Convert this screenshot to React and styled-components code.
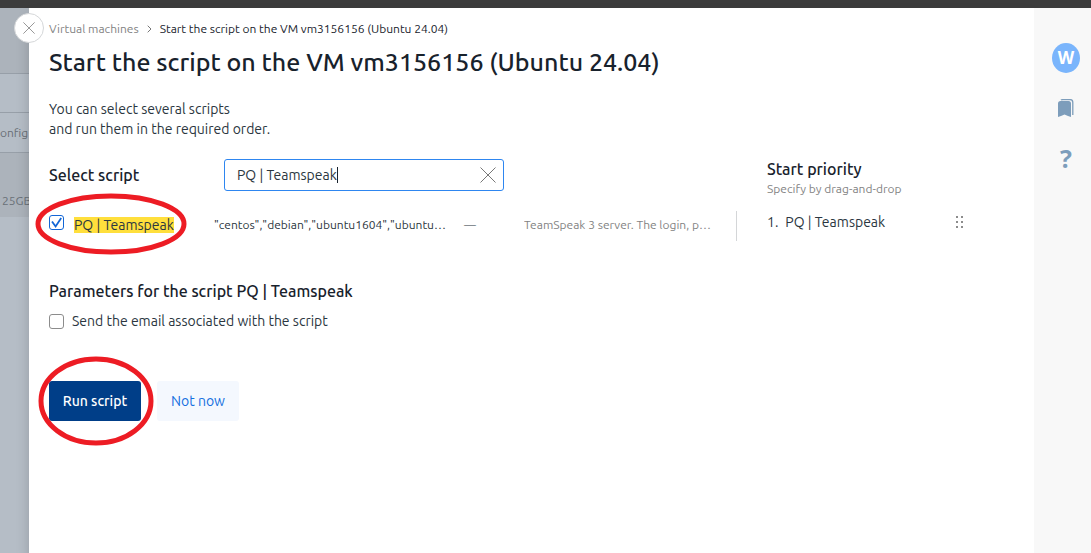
import React, { useState } from "react";
import styled, { createGlobalStyle } from "styled-components";

const GlobalStyle = createGlobalStyle`
  * {
    box-sizing: border-box;
  }
  body {
    margin: 0;
    background: #fff;
    color: #2b3640;
    font: 14px/20px Ubuntu, "Noto Sans", sans-serif;
  }
  button,
  input {
    font: inherit;
    color: inherit;
  }
  h1, h2, p, ol {
    margin: 0;
    padding: 0;
  }
`;

const Page = styled.div`
  display: flex;
  min-height: 100vh;
  border-top: 8px solid #3c3c3c;
`;

const Backdrop = styled.div`
  flex: none;
  width: 29px;
  overflow: hidden;
  background: #b5bdc6;
  color: #697077;
  font-size: 12px;
  white-space: nowrap;
`;

const BackdropRow = styled.div`
  display: flex;
  align-items: ${(props) => props.$align || "center"};
  height: ${(props) => props.$height}px;
  padding-left: ${(props) => props.$indent || 0}px;
  padding-bottom: ${(props) => (props.$align ? 6 : 0)}px;
  background: ${(props) => (props.$dark ? "#acb3bb" : "none")};
  border-bottom: ${(props) => (props.$line ? "1px solid #979fa8" : "0")};
`;

const Drawer = styled.main`
  position: relative;
  flex: 1;
  min-width: 0;
  padding: 11px 20px 40px;
  background: #fff;
  box-shadow: 0 8px 12px rgba(0, 0, 0, 0.18);
`;

const CloseButton = styled.button`
  position: absolute;
  top: 5px;
  left: -15px;
  display: grid;
  place-items: center;
  width: 30px;
  height: 30px;
  padding: 0;
  color: #777;
  background: #fff;
  border: 1px solid #d5d7d9;
  border-radius: 50%;
`;

const Breadcrumbs = styled.nav`
  display: flex;
  align-items: center;
  gap: 8px;
  font-size: 12px;
  color: #18222c;
  a {
    color: #838383;
    text-decoration: none;
  }
`;

const Title = styled.h1`
  margin-top: 7px;
  color: #18222c;
  font-size: 25px;
  line-height: 32px;
  font-weight: 560;
`;

const Intro = styled.p`
  margin-top: 21px;
`;

const Columns = styled.div`
  display: flex;
  margin-top: 20px;
`;

const Scripts = styled.section`
  width: 688px;
`;

const Search = styled.div`
  display: flex;
  align-items: center;
`;

const Heading = styled.h2`
  width: ${(props) => (props.$wide ? "175px" : "auto")};
  color: #18222c;
  font-size: 16px;
  line-height: 20px;
  font-weight: 560;
`;

const SearchBox = styled.div`
  display: flex;
  align-items: center;
  width: 280px;
  height: 32px;
  padding: 0 7px 0 12px;
  border: 1px solid #2e86f0;
  border-radius: 3px;
  input {
    field-sizing: content;
    min-width: 0;
    padding: 0;
    border: 0;
    outline: 0;
    background: none;
    caret-color: transparent;
  }
  button {
    display: flex;
    margin-left: auto;
    padding: 0;
    border: 0;
    color: #777;
    background: none;
  }
`;

const Caret = styled.span`
  flex: none;
  width: 1px;
  height: 16px;
  background: #18222c;
`;

const Row = styled.div`
  display: grid;
  grid-template-columns: 165px 250px 60px 1fr;
  align-items: center;
  height: 30px;
  margin-top: 20px;
  padding: 0 24px 2px 0;
  border-right: 1px solid #d4d6d8;
  font-size: 12px;
`;

const Cut = styled.span`
  overflow: hidden;
  width: ${(props) => props.$width};
  color: ${(props) => (props.$muted ? "#838383" : "inherit")};
  text-overflow: ellipsis;
  white-space: nowrap;
`;

const Option = styled.div`
  position: relative;
  display: flex;
  font-size: 14px;
  label {
    display: flex;
    align-items: ${(props) => props.$align || "center"};
    gap: ${(props) => props.$gap || 8}px;
    min-height: 20px;
  }
  mark {
    align-self: center;
    color: inherit;
    line-height: 16px;
    background: #ffdf3c;
  }
`;

const Checkbox = styled.input.attrs({ type: "checkbox" })`
  appearance: none;
  width: 15px;
  height: 15px;
  margin: 0;
  border: 1px solid #8c8c8c;
  border-radius: 3px;
  background: #fff;
  &:checked {
    border-color: #1266d6;
    background: url("data:image/svg+xml,%3Csvg xmlns='http://www.w3.org/2000/svg' viewBox='0 0 13 13'%3E%3Cpath d='M2 5.5l3.6 5L11.2 2' fill='none' stroke='%231266d6' stroke-width='1.8'/%3E%3C/svg%3E");
  }
`;

const Ring = styled.svg`
  position: absolute;
  top: 50%;
  left: ${(props) => props.$left}px;
  transform: translateY(-50%);
  overflow: visible;
  pointer-events: none;
  ellipse {
    fill: none;
    stroke: #ed1c24;
    stroke-width: 5;
  }
`;

const Priority = styled.section`
  flex: 1;
  max-width: 250px;
  padding-left: 30px;
`;

const Hint = styled.p`
  color: #838383;
  font-size: 12px;
`;

const PriorityList = styled.ol`
  margin-top: 13px;
  list-style: none;
  li {
    display: flex;
    align-items: center;
    gap: 7px;
  }
  svg {
    margin-left: auto;
    margin-right: 23px;
  }
`;

const Parameters = styled.section`
  display: grid;
  gap: 10px;
  margin-top: 40px;
`;

const Actions = styled.div`
  display: flex;
  gap: 16px;
  margin-top: 50px;
`;

const ButtonWrap = styled.div`
  position: relative;
`;

const Button = styled.button`
  width: ${(props) => (props.$primary ? 92 : 82)}px;
  height: 40px;
  padding: 0;
  border: 0;
  border-radius: 3px;
  color: ${(props) => (props.$primary ? "#fff" : "#1470e0")};
  background: ${(props) => (props.$primary ? "#003e88" : "#f4f8fe")};
  font-weight: ${(props) => (props.$primary ? 500 : 400)};
`;

const Sidebar = styled.aside`
  position: relative;
  display: flex;
  flex: none;
  flex-direction: column;
  align-items: center;
  gap: 20px;
  width: 57px;
  padding: 35px 0 0 7px;
  background: #f8f8f8;
  font-family: "Open Sans", sans-serif;
  button {
    display: grid;
    place-items: center;
    width: 30px;
    height: 30px;
    padding: 0;
    border: 0;
    color: #7d9dbb;
    background: none;
  }
  button:first-child {
    width: 28px;
    color: #fff;
    font-size: 17px;
    font-weight: 700;
    background: #7ab5fc;
    border-radius: 50%;
  }
  button:last-child {
    font-size: 25px;
    font-weight: 700;
  }
`;

const Cross = ({ size }) => (
  <svg width={size} height={size} viewBox="0 0 16 16" aria-hidden="true">
    <path d="M.5.5l15 15M15.5.5l-15 15" stroke="currentColor" fill="none" />
  </svg>
);

const Grip = () => (
  <svg width="9" height="12" viewBox="0 0 9 12" fill="#8c8c8c">
    {[0, 5, 10].map((y) => (
      <g key={y}>
        <rect x="1" y={y} width="2" height="2" />
        <rect x="6" y={y} width="2" height="2" />
      </g>
    ))}
  </svg>
);

const App = () => {
  const [query, setQuery] = useState("PQ | Teamspeak");
  const title = "Start the script on the VM vm3156156 (Ubuntu 24.04)";

  return (
    <>
      <GlobalStyle />
      <Page>
        <Backdrop>
          <BackdropRow $height={66} $dark $line />
          <BackdropRow $height={39} $line />
          <BackdropRow $height={40} $line>onfig</BackdropRow>
          <BackdropRow $height={64} $dark $align="flex-end" $indent={2}>
            25GB
          </BackdropRow>
        </Backdrop>
        <Drawer>
          <CloseButton aria-label="Close">
            <Cross size={12} />
          </CloseButton>
          <Breadcrumbs>
            <a href="#machines">Virtual machines</a>
            <svg width="5" height="8" viewBox="0 0 5 8">
              <path d="M.7.7L4 4 .7 7.3" fill="none" stroke="#777" />
            </svg>
            <span>{title}</span>
          </Breadcrumbs>
          <Title>{title}</Title>
          <Intro>
            You can select several scripts
            <br />
            and run them in the required order.
          </Intro>
          <Columns>
            <Scripts>
              <Search>
                <Heading $wide>Select script</Heading>
                <SearchBox>
                  <input
                    aria-label="Select script"
                    value={query}
                    onChange={(e) => setQuery(e.target.value)}
                  />
                  <Caret />
                  <button aria-label="Clear" onClick={() => setQuery("")}>
                    <Cross size={16} />
                  </button>
                </SearchBox>
              </Search>
              <Row>
                <Option $gap={10} $align="flex-start">
                  <label>
                    <Checkbox defaultChecked />
                    <mark>PQ | Teamspeak</mark>
                  </label>
                  <Ring $left={-13} width="152" height="62">
                    <ellipse cx="75" cy="30" rx="73" ry="28" />
                  </Ring>
                </Option>
                <Cut $width="236px">
                  "centos","debian","ubuntu1604","ubuntu1804"
                </Cut>
                <span>—</span>
                <Cut $muted>TeamSpeak 3 server. The login, password and token</Cut>
              </Row>
            </Scripts>
            <Priority>
              <Heading>Start priority</Heading>
              <Hint>Specify by drag-and-drop</Hint>
              <PriorityList>
                <li>
                  <span>1.</span>
                  <span>PQ | Teamspeak</span>
                  <Grip />
                </li>
              </PriorityList>
            </Priority>
          </Columns>
          <Parameters>
            <Heading>Parameters for the script PQ | Teamspeak</Heading>
            <Option>
              <label>
                <Checkbox />
                Send the email associated with the script
              </label>
            </Option>
          </Parameters>
          <Actions>
            <ButtonWrap>
              <Button $primary>Run script</Button>
              <Ring $left={-11} width="116" height="88">
                <ellipse cx="58" cy="44" rx="55" ry="42" />
              </Ring>
            </ButtonWrap>
            <Button>Not now</Button>
          </Actions>
        </Drawer>
        <Sidebar>
          <button aria-label="Account">W</button>
          <button aria-label="Bookmarks">
            <svg width="16" height="19" viewBox="0 0 16 19">
              <path
                d="M3 1.2Q3.5.6 5 .6h7Q14.800.6 14.800 3.500v12.500"
                fill="none"
                stroke="currentColor"
                strokeWidth="1.3"
              />
              <path
                d="M0 4.500Q0 2 2.500 2H10.500Q13 2 13 4.500V18L10 17 6.500 15.500 3 17 0 18z"
                fill="currentColor"
              />
            </svg>
          </button>
          <button aria-label="Help">?</button>
        </Sidebar>
      </Page>
    </>
  );
};

export default App;
